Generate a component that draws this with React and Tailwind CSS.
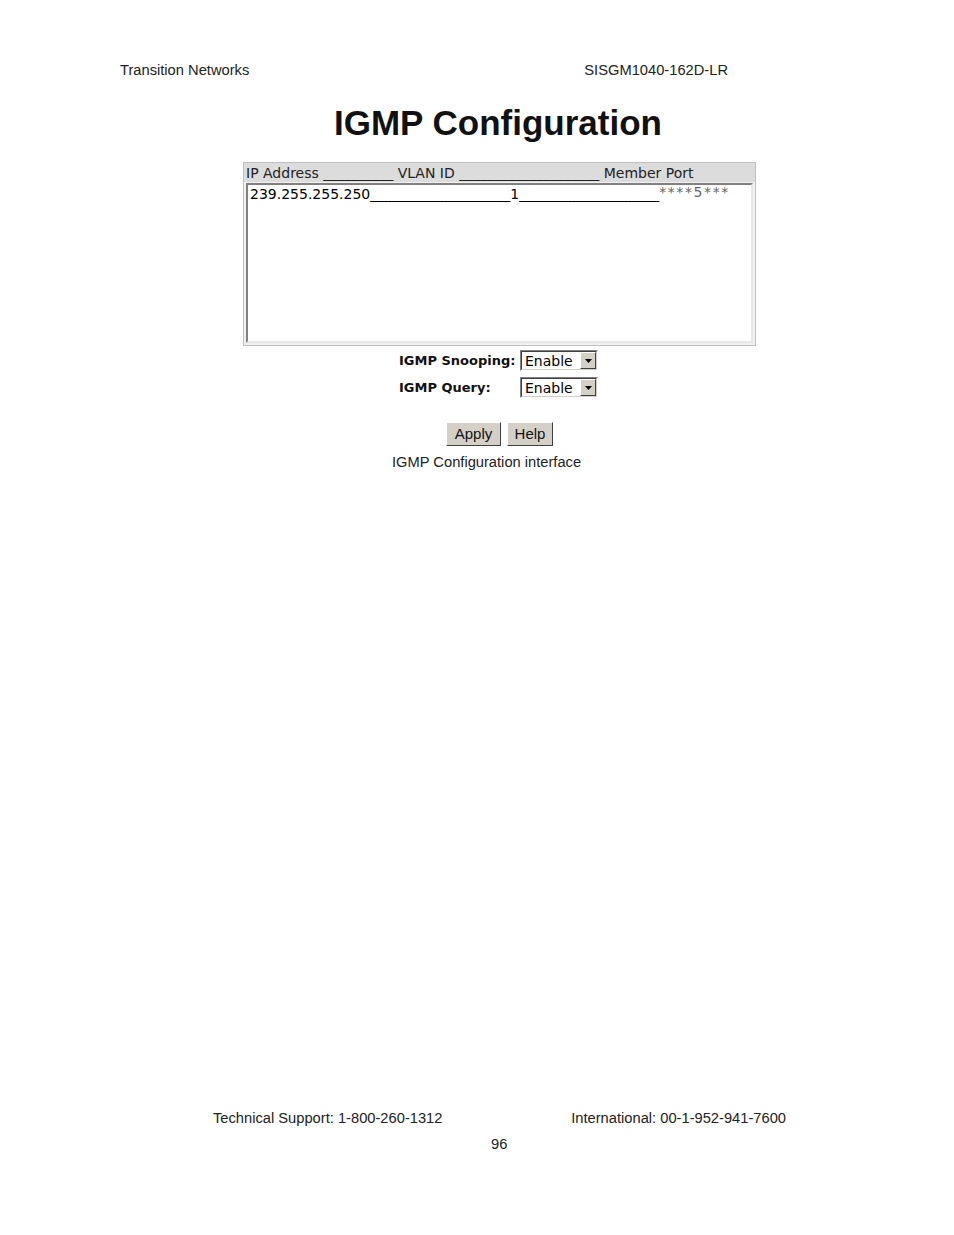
import React from "react";

const sans = { fontFamily: '"Liberation Sans", Arial, sans-serif' };
const verdana = { fontFamily: '"DejaVu Sans", Verdana, sans-serif' };

const Select = ({ value }) => (
    <div className="flex h-[21px] w-[78px] items-stretch border border-t-[#808080] border-l-[#808080] border-b-white border-r-white bg-white">
        <div className="flex flex-1 items-stretch border border-t-[#404040] border-l-[#404040] border-b-[#d4d0c8] border-r-[#d4d0c8]">
            <span className="flex-1 pl-[3px] text-[14px] leading-[18px] text-black" style={verdana}>
                {value}
            </span>
            <span className="flex w-[16px] items-center justify-center border border-t-white border-l-white border-b-[#404040] border-r-[#404040] bg-[#d4d0c8]">
                <svg width="7" height="4" viewBox="0 0 7 4">
                    <path d="M0 0h7L3.5 4z" fill="#000" />
                </svg>
            </span>
        </div>
    </div>
);

const Button = ({ children, w }) => (
    <button
        className={`h-[24px] ${w} border border-t-white border-l-white border-b-[#404040] border-r-[#404040] bg-[#d4d0c8] text-[15px] leading-[20px] text-[#111]`}
        style={sans}
    >
        {children}
    </button>
);

export default function App() {
    return (
        <div className="relative h-[1235px] w-[954px] bg-white text-black" style={sans}>
            <div className="flex justify-between pl-[120px] pr-[226px] pt-[61px] text-[14.7px] leading-[18px] text-[#222]">
                <span>Transition Networks</span>
                <span>SISGM1040-162D-LR</span>
            </div>

            <h1 className="mt-[22px] pl-[334px] text-[35px] font-bold leading-[44px] text-[#111]">
                IGMP Configuration
            </h1>

            <div className="ml-[243px] mt-[17px] w-[513px] border border-[#c0c0c0] bg-[#f0f0f0]">
                <div className="h-[19px] bg-[#dcdcdc] pl-[2px] text-[14px] leading-[20px] text-[#222] whitespace-pre" style={verdana}>
                    {"IP Address __________ VLAN ID ____________________ Member Port"}
                </div>
                <div className="mx-[2px] mb-[2px] mt-[1px] h-[160px] border-2 border-t-[#808080] border-l-[#808080] border-b-[#e8e8e8] border-r-[#e8e8e8] bg-white">
                    <div className="flex items-start pl-[2px] text-[14px] leading-[18px] text-black whitespace-pre" style={verdana}>
                        <span>{"239.255.255.250____________________1____________________"}</span>
                        <span className="text-[14px] leading-[14px] tracking-[1.6px] text-[#666]">{"****5***"}</span>
                    </div>
                </div>
            </div>

            <div className="mt-[4px] flex flex-col items-start gap-[6px] pl-[399px]">
                <div className="flex items-center">
                    <span className="w-[121px] text-[13px] font-bold text-[#111]" style={verdana}>
                        IGMP Snooping:
                    </span>
                    <Select value="Enable" />
                </div>
                <div className="flex items-center">
                    <span className="w-[121px] text-[13px] font-bold text-[#111]" style={verdana}>
                        IGMP Query:
                    </span>
                    <Select value="Enable" />
                </div>
            </div>

            <div className="mt-[24px] flex gap-[6px] pl-[446px]">
                <Button w="w-[55px]">Apply</Button>
                <Button w="w-[46px]">Help</Button>
            </div>

            <p className="mt-[7px] pl-[392px] text-[14.7px] leading-[18px] text-[#222]">
                IGMP Configuration interface
            </p>

            <div className="absolute left-0 right-0 top-[1109px]">
                <div className="flex justify-between pl-[213px] pr-[168px] text-[14.7px] leading-[18px] text-[#222]">
                    <span>Technical Support: 1-800-260-1312</span>
                    <span>International: 00-1-952-941-7600</span>
                </div>
                <p className="mt-[8px] pl-[491px] text-[14.7px] leading-[18px] text-[#222]">96</p>
            </div>
        </div>
    );
}
